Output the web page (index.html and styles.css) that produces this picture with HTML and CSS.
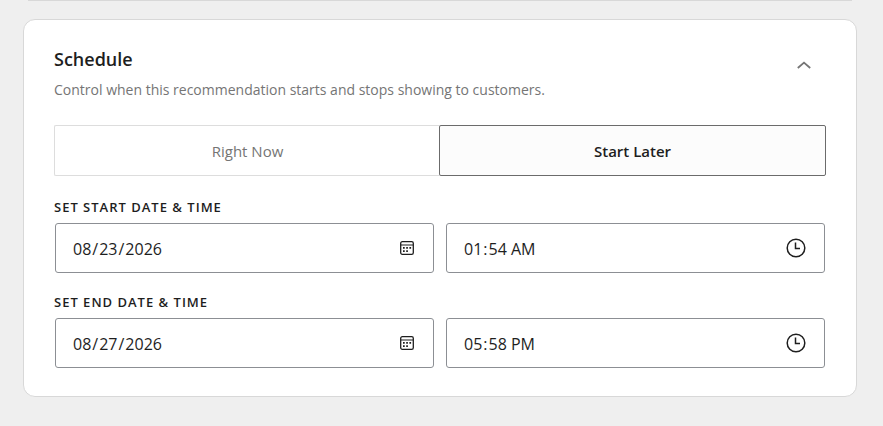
FILE: index.html
```html
<!DOCTYPE html>
<html lang="en">
  <head>
    <meta charset="utf-8" />
    <title>Schedule</title>
    <link rel="stylesheet" href="styles.css">
  </head>
  <body>
    <svg class="sprite" width="0" height="0" aria-hidden="true">
      <symbol id="icon-calendar" viewBox="0 0 16 16">
        <rect x="1.7" y="1.7" width="12.6" height="12.6" rx="1.6" fill="none" stroke="currentColor" stroke-width="1.3" />
        <path d="M2 5h12" stroke="currentColor" stroke-width="1" />
        <path d="M4 7h1.7v1.7H4zM7.2 7h1.7v1.7H7.2zM10.4 7h1.7v1.7h-1.7zM4 10.2h1.7v1.7H4zM7.2 10.2h1.7v1.7H7.2z" fill="currentColor" />
      </symbol>
      <symbol id="icon-clock" viewBox="0 0 20 20">
        <circle cx="10" cy="10" r="8.8" fill="none" stroke="currentColor" stroke-width="1.5" />
        <path d="M9.5 4.5v6h4.5" fill="none" stroke="currentColor" stroke-width="1.5" />
      </symbol>
    </svg>
    <div class="previous-card"></div>
    <section class="card">
      <div class="header">
        <div>
          <h2 class="title">Schedule</h2>
          <p class="description">Control when this recommendation starts and stops showing to customers.</p>
        </div>
        <button class="toggle" type="button" aria-label="Collapse">
          <svg width="16" height="10" viewBox="0 0 16 10">
            <path d="M1.8 8 8 2.6 14.2 8" fill="none" stroke="currentColor" stroke-width="1.8" />
          </svg>
        </button>
      </div>
      <div class="tabs">
        <button class="tab" type="button">Right Now</button>
        <button class="tab active" type="button">Start Later</button>
      </div>
      <div class="group">
        <label class="label" for="start-date">SET START DATE &amp; TIME</label>
        <div class="fields">
          <div class="field">
            <input id="start-date" type="date" value="2026-08-23" />
            <svg class="icon calendar"><use href="#icon-calendar" /></svg>
          </div>
          <div class="field">
            <input type="time" value="01:54" aria-label="Start time" />
            <svg class="icon clock"><use href="#icon-clock" /></svg>
          </div>
        </div>
      </div>
      <div class="group">
        <label class="label" for="end-date">SET END DATE &amp; TIME</label>
        <div class="fields">
          <div class="field">
            <input id="end-date" type="date" value="2026-08-27" />
            <svg class="icon calendar"><use href="#icon-calendar" /></svg>
          </div>
          <div class="field">
            <input type="time" value="17:58" aria-label="End time" />
            <svg class="icon clock"><use href="#icon-clock" /></svg>
          </div>
        </div>
      </div>
    </section>
  </body>
</html>
```
FILE: styles.css
```css
* {
  box-sizing: border-box;
}
body {
  margin: 0;
  padding: 0 26px 29px 23px;
  background: #efefef;
  color: #1e1e1e;
  font-family: "Segoe UI", "Open Sans", "Noto Sans", sans-serif;
}
button,
input {
  font-family: inherit;
}
.sprite {
  position: absolute;
}
.previous-card {
  height: 1px;
  margin: 0 5px 18px;
  background: #d8d8d8;
}
.card {
  padding: 27px 30px 28px;
  border: 1px solid #d8d8d8;
  border-radius: 12px;
  background: #fff;
}
.header {
  display: flex;
  justify-content: space-between;
  align-items: flex-start;
  margin-bottom: 25px;
}
.title {
  margin: 0 0 9px;
  font-size: 18px;
  line-height: 24px;
  font-weight: 600;
}
.description {
  margin: 0;
  color: #757575;
  font-size: 14px;
  line-height: 20px;
}
.toggle {
  display: flex;
  margin: 13px 14px 0 0;
  padding: 0;
  border: 0;
  background: none;
  color: #757575;
}
.tabs {
  display: flex;
  margin-bottom: 21px;
}
.tab {
  flex: 1;
  height: 51px;
  border: 1px solid #ddd;
  border-right: 0;
  border-radius: 2px 0 0 2px;
  background: #fff;
  color: #757575;
  font-size: 15px;
}
.tab.active {
  margin-left: -1px;
  border: 1px solid #6b6b6b;
  border-radius: 2px;
  background: #fcfcfc;
  color: #1e1e1e;
  font-weight: 600;
}
.group + .group {
  margin-top: 19px;
}
.label {
  display: block;
  margin-bottom: 6px;
  font-size: 13px;
  line-height: 20px;
  font-weight: 600;
  letter-spacing: 1px;
}
.fields {
  display: grid;
  grid-template-columns: 1fr 1fr;
  gap: 12px;
  padding: 0 1px;
}
.field {
  position: relative;
}
.field input {
  display: block;
  width: 100%;
  height: 50px;
  padding: 2px 16px 0;
  border: 1px solid #8c8f94;
  border-radius: 3px;
  background: #fff;
  color: #1e1e1e;
  font-size: 16px;
}
/* the drawn icon shows through, the native one still opens the picker */
.field input::-webkit-calendar-picker-indicator {
  opacity: 0;
}
.icon {
  position: absolute;
  top: 0;
  bottom: 0;
  right: 19px;
  margin: auto 0;
  pointer-events: none;
}
.calendar {
  width: 16px;
  height: 16px;
}
.clock {
  width: 20px;
  height: 20px;
}
```
